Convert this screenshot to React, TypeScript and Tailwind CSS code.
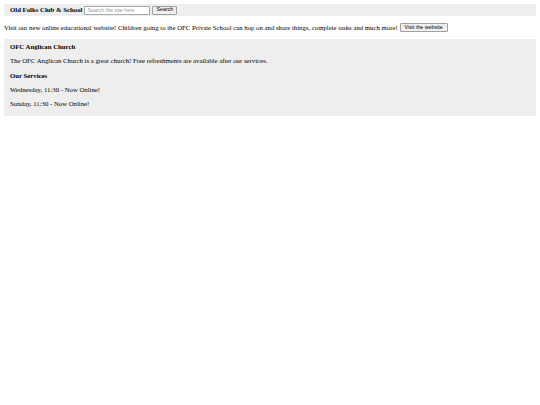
export default function App() {
  return (
    <div className="bg-white min-h-[405px] p-[4px] text-black" style={{ fontFamily: '"Liberation Serif", "Times New Roman", serif' }}>
      <div className="flex items-center bg-[#eeeeee] h-[12px] pl-[6px] gap-[2px]">
        <span className="font-bold text-[6.75px] leading-none">Old Folks Club &amp; School</span>
        <input
          placeholder="Search the site here"
          className="w-[66px] h-[9px] border border-[#a9a9a9] bg-white px-[2px] text-[5.3px] leading-none placeholder:text-[#9a9a9a] outline-none"
          style={{ fontFamily: '"Liberation Sans", Arial, sans-serif' }}
        />
        <button
          className="h-[9px] w-[25px] border border-[#a0a0a0] rounded-[1px] bg-[#efefef] text-[5.3px] leading-none"
          style={{ fontFamily: '"Liberation Sans", Arial, sans-serif' }}
        >
          Search
        </button>
      </div>

      <p className="mt-[7px] text-[6.75px] leading-[9px] flex items-center gap-[2px]">
        <span>Visit our new online educational website! Children going to the OFC Private School can hop on and share things, complete tasks and much more!</span>
        <button
          className="h-[9px] w-[48px] border border-[#a0a0a0] rounded-[1px] bg-[#efefef] text-[5.3px] leading-none"
          style={{ fontFamily: '"Liberation Sans", Arial, sans-serif' }}
        >
          Visit the website
        </button>
      </p>

      <div className="mt-[7px] bg-[#eeeeee] px-[6px] pt-[3px] pb-[8px] text-[6.75px]">
        <h2 className="font-bold leading-[9px]">OFC Anglican Church</h2>
        <p className="mt-[5.3px] leading-[9px]">The OFC Anglican Church is a great church! Free refreshments are available after our services.</p>
        <h3 className="mt-[5.3px] font-bold leading-[9px]">Our Services</h3>
        <p className="mt-[5.3px] leading-[9px]">Wednesday, 11:30 - Now Online!</p>
        <p className="mt-[5.3px] leading-[9px]">Sunday, 11:30 - Now Online!</p>
      </div>
    </div>
  );
}
